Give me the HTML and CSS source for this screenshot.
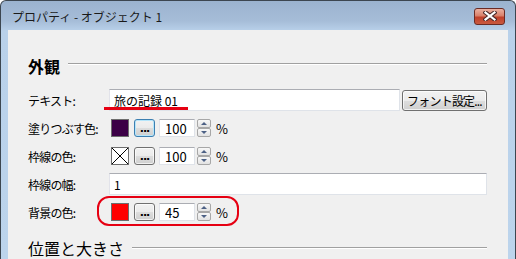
FILE: index.html
```html
<!DOCTYPE html>
<html lang="ja">
<head>
  <meta charset="UTF-8">
  <title>プロパティ - オブジェクト 1</title>
<link rel="stylesheet" href="styles.css">
</head>
<body>
  <div class="window">
    <div class="titlebar">
      <span class="title">プロパティ - オブジェクト 1</span>
      <button class="close-btn" aria-label="閉じる">
        <svg width="14" height="10" viewBox="0 0 14 10">
          <path d="M2.5 1.5 L11.5 8.5 M11.5 1.5 L2.5 8.5" stroke="#4a2a2a" stroke-width="4.2" stroke-linecap="square"/>
          <path d="M2.5 1.5 L11.5 8.5 M11.5 1.5 L2.5 8.5" stroke="#ffffff" stroke-width="2.2" stroke-linecap="square"/>
        </svg>
      </button>
    </div>

    <div class="content">
      <!-- 外観 -->
      <div class="section-title">外観</div>

      <div class="row">
        <label class="label">テキスト:</label>
        <div class="field">
          <input class="textbox text-main" type="text" value="旅の記録 01">
          <button class="btn font-btn">フォント設定...</button>
          <span class="mark-underline"></span>
        </div>
      </div>

      <div class="row">
        <label class="label">塗りつぶす色:</label>
        <div class="field">
          <span class="swatch" style="background:#3c0046"></span>
          <button class="btn dots focused">...</button>
          <input class="textbox num" type="text" value="100">
          <span class="spinner"><span class="up"></span><span class="down"></span></span>
          <span class="unit">%</span>
        </div>
      </div>

      <div class="row">
        <label class="label">枠線の色:</label>
        <div class="field">
          <span class="swatch none">
            <svg width="16" height="16" viewBox="0 0 16 16"><path d="M0 0 L16 16 M16 0 L0 16" stroke="#000" stroke-width="1"/></svg>
          </span>
          <button class="btn dots">...</button>
          <input class="textbox num" type="text" value="100">
          <span class="spinner"><span class="up"></span><span class="down"></span></span>
          <span class="unit">%</span>
        </div>
      </div>

      <div class="row">
        <label class="label">枠線の幅:</label>
        <div class="field">
          <input class="textbox text-wide" type="text" value="1">
        </div>
      </div>

      <div class="row">
        <label class="label">背景の色:</label>
        <div class="field">
          <span class="swatch" style="background:#ff0000"></span>
          <button class="btn dots">...</button>
          <input class="textbox num" type="text" value="45">
          <span class="spinner"><span class="up"></span><span class="down"></span></span>
          <span class="unit">%</span>
          <span class="mark-box"></span>
        </div>
      </div>

      <!-- 位置と大きさ -->
      <div class="section-title second">位置と大きさ</div>
    </div>
  </div>
</body>
</html>
```

FILE: styles.css
```css
body {
  margin: 0;
  padding: 0;
  font-family: "Noto Sans CJK JP", "Noto Sans", sans-serif;
  font-size: 12px;
  color: #000;
  background: #fff;
  overflow: hidden;
}

.window {
  width: 514px;
  height: 258px;
  border: 1px solid #3c4650;
  border-bottom: none;
  border-radius: 6px 6px 0 0;
  background: linear-gradient(to bottom, #9bb3cf 0px, #a6bdd8 20px, #b9d1ea 30px, #bcd4ec 100%);
  display: flex;
  flex-direction: column;
}

.titlebar {
  height: 29px;
  display: flex;
  align-items: center;
  justify-content: space-between;
  padding: 0 10px 0 11px;
}

.title {
  font-size: 12px;
  color: #1a1a1a;
  margin-top: 1px;
}

.close-btn {
  width: 31px;
  height: 17px;
  margin-top: 1px;
  padding: 0;
  border: 1px solid #6b2b24;
  border-radius: 3px;
  background: linear-gradient(to bottom, #eab0a0 0%, #d9806a 45%, #c0402a 55%, #c95a40 100%);
  display: flex;
  align-items: center;
  justify-content: center;
}

.content {
  flex: 1;
  margin: 0 7px;
  background: #f0f0f0;
  padding: 26px 21px 0 20px;
}

.section-title {
  display: flex;
  align-items: center;
  gap: 8px;
  height: 20px;
  font-size: 16px;
  font-weight: bold;
  line-height: 20px;
  margin-bottom: 10px;
}

.section-title::after {
  content: "";
  flex: 1;
  height: 0;
  border-top: 1px solid #a0a0a0;
  border-bottom: 1px solid #ffffff;
  margin-top: -4px;
}

.section-title.second {
  font-weight: normal;
  margin-top: 12px;
  margin-bottom: 0;
}

.section-title.second::after {
  margin-top: 0;
}

.row {
  display: flex;
  align-items: center;
  height: 28px;
}

.label {
  width: 81px;
  flex-shrink: 0;
  letter-spacing: -0.8px;
}

.field {
  position: relative;
  flex: 1;
  display: flex;
  align-items: center;
}

.textbox {
  box-sizing: border-box;
  font-family: inherit;
  font-size: 12px;
  color: #000;
  background: #fff;
  border: 1px solid #dfe3e9;
  border-top-color: #abadb3;
  border-left-color: #e2e3ea;
  padding: 0 4px;
  margin: 0;
  outline: none;
}

.text-main {
  width: 291px;
  height: 22px;
}

.text-wide {
  width: 100%;
  height: 22px;
}

.num {
  width: 36px;
  height: 18px;
  margin-left: 4px;
  padding: 0 5px;
  font-size: 13px;
}

.btn {
  font-family: inherit;
  font-size: 12px;
  color: #000;
  border: 1px solid #707070;
  border-radius: 3px;
  background: linear-gradient(to bottom, #f2f2f2 0%, #ebebeb 50%, #dddddd 51%, #cfcfcf 100%);
  padding: 0;
  margin: 0;
  box-shadow: inset 0 0 0 1px rgba(255, 255, 255, 0.7);
}

.font-btn {
  width: 85px;
  height: 21px;
  margin-left: 2px;
  line-height: 17px;
  letter-spacing: -0.8px;
}

.dots {
  width: 21px;
  height: 18px;
  margin-left: 5px;
  font-family: "DejaVu Sans", sans-serif;
  font-size: 11px;
  font-weight: bold;
  line-height: 12px;
  letter-spacing: -1px;
  padding: 2px 0 0 0;
}

.dots.focused {
  border-color: #3c7fb1;
  box-shadow: inset 0 0 0 1px #b6e6fb;
}

.swatch {
  box-sizing: border-box;
  width: 18px;
  height: 18px;
  margin-left: 2px;
  border: 1px solid #6d6d6d;
  display: inline-block;
}

.swatch.none {
  background: #fff;
  display: flex;
  align-items: center;
  justify-content: center;
}

.swatch.none svg {
  display: block;
}

.spinner {
  box-sizing: border-box;
  width: 14px;
  height: 18px;
  margin-left: 2px;
  display: flex;
  flex-direction: column;
}

.spinner span {
  flex: 1;
  border: 1px solid #a7a7a7;
  border-radius: 2px;
  background: linear-gradient(to bottom, #f8f8f8, #e2e2e2);
  display: flex;
  align-items: center;
  justify-content: center;
}

.spinner .up::before,
.spinner .down::before {
  content: "";
  width: 0;
  height: 0;
  border-left: 3px solid transparent;
  border-right: 3px solid transparent;
}

.spinner .up::before {
  border-bottom: 3px solid #4d6185;
}

.spinner .down::before {
  border-top: 3px solid #4d6185;
}

.unit {
  margin-left: 5px;
  font-size: 13px;
}

/* 注釈の赤線 */
.mark-underline {
  position: absolute;
  left: -5px;
  top: 18px;
  width: 84px;
  height: 3px;
  background: #e60012;
}

.mark-box {
  position: absolute;
  left: -12px;
  top: -7px;
  width: 138px;
  height: 26px;
  border: 2.5px solid #e60012;
  border-radius: 12px;
}
```
